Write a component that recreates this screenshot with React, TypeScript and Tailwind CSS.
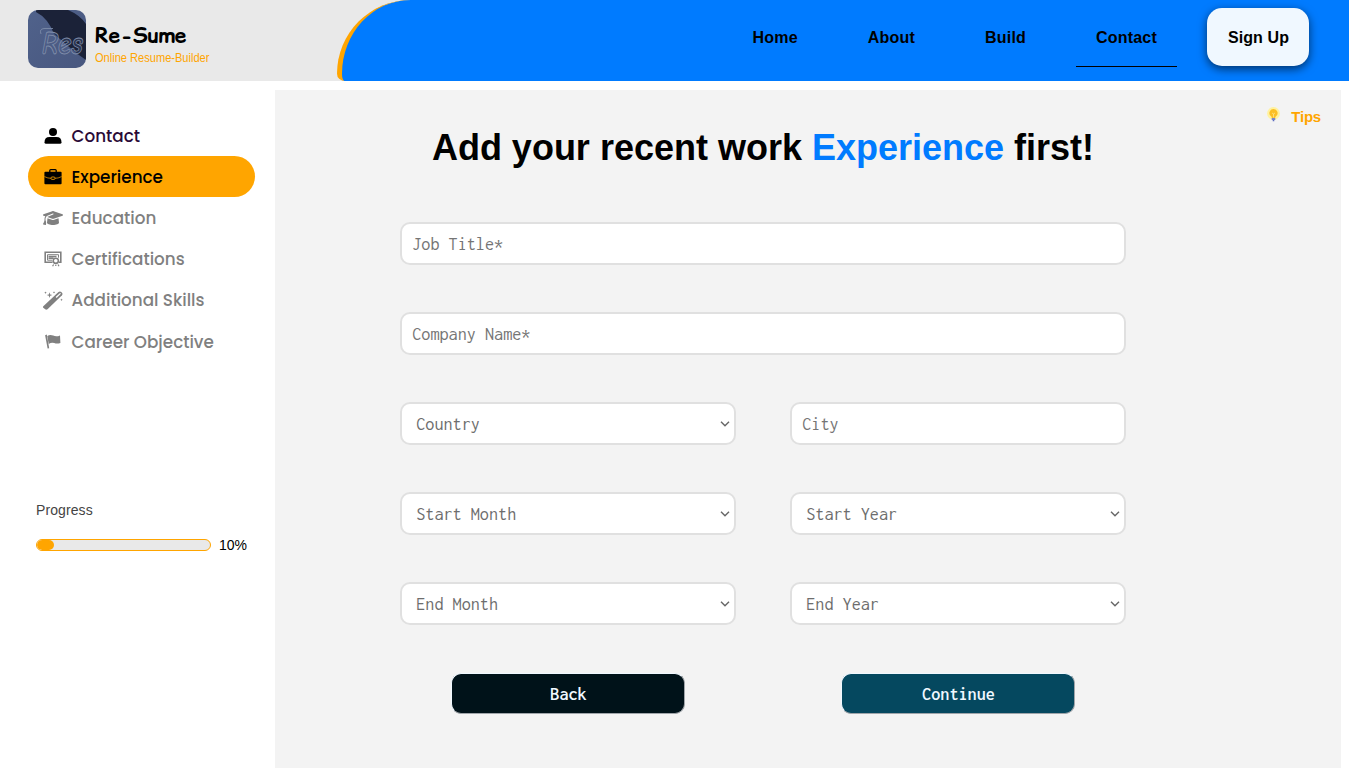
import React from "react";
import { FaGraduationCap } from "react-icons/fa6";

const MONO = "font-['Inconsolata','Noto_Sans_Mono_CJK_SC',monospace]";

function Logo() {
  return (
    <svg width="58" height="58" viewBox="0 0 58 58" className="rounded-[10px]">
      <defs>
        <linearGradient id="cloth" x1="0" y1="0" x2="1" y2="1">
          <stop offset="0" stopColor="#50628b" />
          <stop offset="1" stopColor="#48577f" />
        </linearGradient>
      </defs>
      <rect width="58" height="58" fill="url(#cloth)" />
      <path d="M8 0H40Q52 5 58 14V50Q49 44 40 36T26 24Q20 8 8 2Z" fill="#1b2238" />
      <g fontStyle="italic" fontWeight="700" fontFamily="Comic Neue, cursive" fill="#4f608a" fillOpacity="0.3" stroke="#8290ac" strokeWidth="0.8">
        <text x="14" y="44" fontSize="32" textLength="41" lengthAdjust="spacingAndGlyphs">
          Res
        </text>
      </g>
      <path d="M13 24Q11 19 16 18.5H25" fill="none" stroke="#8290ac" strokeWidth=".8" />
    </svg>
  );
}

function Person() {
  return (
    <svg width="18" height="16" viewBox="0 0 18 16" fill="currentColor">
      <circle cx="9" cy="4" r="4" />
      <path d="M5.5 9h7Q17.5 9 17.5 14.2 17.5 15.8 16 15.8H2Q.5 15.8.5 14.2.5 9 5.5 9Z" />
    </svg>
  );
}

function Briefcase() {
  return (
    <svg width="18" height="16" viewBox="0 0 18 16">
      <path d="M5.8 3V1.6Q5.8.7 6.7.7h4.6q.9 0 .9.9V3" fill="none" stroke="currentColor" strokeWidth="1.3" />
      <rect x=".4" y="2.8" width="17.2" height="12.4" rx="1" fill="currentColor" />
      <path d="M.4 7.6Q4 9.4 7 9.3M17.6 7.6Q14 9.4 11 9.3" fill="none" stroke="#ffa500" strokeWidth=".7" />
      <rect x="7" y="8" width="4" height="2.4" rx="1" fill="none" stroke="#ffa500" strokeWidth=".8" />
    </svg>
  );
}

function Certificate() {
  return (
    <svg width="18" height="16" viewBox="0 0 18 16" fill="none" stroke="currentColor">
      <path d="M8.5 11.3H1.2V1.2h15.6v10.1H15" strokeWidth="1.6" />
      <path d="M8 9.2H3.5V3.7h11v3" strokeWidth="1" />
      <path d="M4.5 5.5h8M4.5 7.3h5" strokeWidth="1.5" />
      <circle cx="11.8" cy="9.8" r="2.6" strokeWidth="1.6" />
      <path d="M9.6 13.5l-1 1.8M14 13.5l1 1.8M11.8 13.8V15" strokeWidth="1.2" />
    </svg>
  );
}

function Wand() {
  return (
    <svg width="20" height="19" viewBox="0 0 20 19" fill="currentColor">
      <path d="M.3 15.3 15.5 1Q17 0 18.3 1.1l.8.9q.9 1.2-.1 2.2L4.5 18.2Q3.4 19 2.2 18.3L.3 16.8Q-.4 16 .3 15.3Z" />
      <path d="m12.6 6 4.2-3.8q.4-.3.8.1.3.4 0 .8L13.6 7Z" fill="#fff" />
      <path d="m6.5 1.2.7 2.2 2.2.7-2.2.7-.7 2.2-.7-2.2L3.6 4.1l2.2-.7ZM2.5.4l.4.9.9.4-.9.4-.4.9-.4-.9-.9-.4.9-.4ZM11 .2l.4.8.8.4-.8.4-.4.8-.4-.8-.8-.4.8-.4ZM18.5 7.5l.4.9.9.4-.9.4-.4.9-.4-.9-.9-.4.9-.4Z" />
    </svg>
  );
}

function Flag() {
  return (
    <svg width="16" height="15" viewBox="0 0 16 15" fill="currentColor">
      <path d="M.1 1.2 1.8.4 4.2 14.2l-1.6.3Z" />
      <path d="M2.3 2Q5 .2 8.2 1.6T15 1.4l.4 7.5Q12 10.2 9.3 9.1T3.700 9.900Z" />
    </svg>
  );
}

function Bulb() {
  return (
    <svg width="13" height="15" viewBox="0 0 13 15">
      <circle cx="6.5" cy="6.5" r="6.4" fill="#fff2a0" />
      <path d="M6.5 2a4 4 0 0 0-2.5 7.2q.8.7.8 1.8h3.4q0-1.1.8-1.8A4 4 0 0 0 6.5 2Z" fill="#fbbf24" />
      <path d="M5 6l1.5 1L8 6M6.5 7v3.5" fill="none" stroke="#fde68a" strokeWidth=".8" />
      <rect x="4.7" y="11" width="3.6" height="2" rx=".6" fill="#7986cb" />
      <rect x="5.6" y="13" width="1.8" height="1.2" rx=".5" fill="#5c6bc0" />
    </svg>
  );
}

const steps = [
  { label: "Contact", icon: <Person />, tone: "text-[#2a0a37]", iconTone: "text-black" },
  { label: "Experience", icon: <Briefcase />, tone: "text-black", iconTone: "text-black" },
  { label: "Education", icon: <FaGraduationCap size={20} />, tone: "text-[#808080]", iconTone: "text-[#808080]" },
  { label: "Certifications", icon: <Certificate />, tone: "text-[#808080]", iconTone: "text-[#808080]" },
  { label: "Additional Skills", icon: <Wand />, tone: "text-[#808080]", iconTone: "text-[#808080]" },
  { label: "Career Objective", icon: <Flag />, tone: "text-[#808080]", iconTone: "text-[#808080]" },
];

function Field({ label, wide }: { label: string; wide?: boolean }) {
  return (
    <input
      placeholder={label}
      className={`${MONO} ${wide ? "col-span-2" : ""} h-[43px] w-full rounded-[10px] border-2 border-[#e0e0e0] bg-white pr-2.5 pl-[10.2px] text-[18.2px] text-[#757575] placeholder:text-[#757575]`}
    />
  );
}

function Select({ label }: { label: string }) {
  return (
    <div className={`${MONO} flex h-[43px] items-center justify-between rounded-[10px] border-2 border-[#e0e0e0] bg-white pr-1 pl-[14.2px] text-[18.2px] text-[#6d6d6d]`}>
      <span>{label}</span>
      <svg width="10" height="6" viewBox="0 0 10 6" fill="none" stroke="#666" strokeWidth="1.4">
        <path d="M1 .8 5 4.8 9 .8" />
      </svg>
    </div>
  );
}

export default function App() {
  return (
    <div className="flex h-[768px] w-[1349px] flex-col overflow-hidden bg-white font-['Liberation_Sans',Arial,sans-serif] text-black">
      <header className="flex h-[81px] shrink-0 justify-between bg-[#e9e9e9]">
        <div className="flex gap-[9px] pt-[10px] pl-7">
          <Logo />
          <div className="w-[140px] pt-[12px]">
            <div className="font-['Comic_Sans_MS','Comic_Relief',cursive] text-[21px] leading-7 font-bold">Re-Sume</div>
            <div className="origin-left scale-x-[0.82] text-[13.5px] leading-4 whitespace-nowrap text-[#ffa500]">Online Resume-Builder</div>
          </div>
        </div>
        <nav className="flex w-[1012px] justify-end gap-[30px] rounded-tl-[100px] rounded-bl-[10px] border-l-[5px] border-[#ffa500] bg-[#007bff] pt-2 pr-10 text-[16px] font-bold tracking-[0.2px]">
          {["Home", "About", "Build", "Contact"].map((item) => (
            <a key={item} className={`flex h-[59px] items-center border-b px-5 pt-0.5 ${item === "Contact" ? "border-black" : "border-transparent"}`}>
              {item}
            </a>
          ))}
          <button className="h-[58px] w-[102px] rounded-[15px] bg-[#f0f8ff] pt-0.5 pl-px font-bold tracking-[0.1px] shadow-[0_3px_10px_rgba(0,0,0,0.6)]">Sign Up</button>
        </nav>
      </header>

      <div className="flex min-h-0 flex-1 pt-[9px] pr-2">
        <aside className="w-[275px] shrink-0 pt-[25px] pr-5 pl-7">
          <ul className="font-['Poppins','Inter',sans-serif] text-[16.8px] font-medium">
            {steps.map((s) => (
              <li key={s.label} className={`flex h-[41.2px] items-center rounded-full pl-[14px] ${s.tone} ${s.label === "Experience" ? "bg-[#ffa500]" : ""}`}>
                <span className={`mr-[7.5px] flex w-[22px] justify-center ${s.iconTone}`}>{s.icon}</span>
                <span className="pt-[1.2px] whitespace-nowrap">{s.label}</span>
              </li>
            ))}
          </ul>
          <div className="mt-[140px] pl-2">
            <div className="text-[14px] leading-4 tracking-[0.1px] text-[#444]">Progress</div>
            <div className="mt-[19px] flex items-center gap-2">
              <div className="h-3 w-[175px] overflow-hidden rounded-full border border-[#ffa500] bg-[#e9e9e9]">
                <div className="h-full w-[17px] rounded-full bg-[#ffa500]" />
              </div>
              <span className="text-[14px] leading-4">10%</span>
            </div>
          </div>
        </aside>

        <main className="relative flex-1 bg-[#f3f3f3]">
          <div className="absolute top-[16px] right-5 flex items-start gap-[11px] text-[15px] font-bold text-[#ffa500]">
            <span className="mt-px">
              <Bulb />
            </span>
            <span className="tracking-[-0.2px]">Tips</span>
          </div>
          <div className="flex w-[976px] flex-col items-center pt-[37px]">
            <h1 className="text-[36px] leading-[42px] font-bold whitespace-nowrap">
              Add your recent work <span className="text-[#007bff]">Experience</span> first!
            </h1>
          </div>
          <form className="mt-[53px] ml-[125px] grid w-[726px] grid-cols-2 gap-x-[54px] gap-y-[47px]">
            <Field label="Job Title*" wide />
            <Field label="Company Name*" wide />
            <Select label="Country" />
            <Field label="City" />
            <Select label="Start Month" />
            <Select label="Start Year" />
            <Select label="End Month" />
            <Select label="End Year" />
            <button type="button" className={`${MONO} mt-px h-[41px] w-[234px] justify-self-center rounded-[10px] border border-t-[#f0f8ff] border-r-[#a0a5aa] border-b-[#a0a5aa] border-l-[#f0f8ff] bg-[#001219] pl-px text-[18.2px] font-semibold text-[#f0f8ff]`}>
              Back
            </button>
            <button type="button" className={`${MONO} mt-px h-[41px] w-[234px] justify-self-center rounded-[10px] border border-t-[#f0f8ff] border-r-[#a0a5aa] border-b-[#a0a5aa] border-l-[#f0f8ff] bg-[#05485f] pl-px text-[18.2px] font-semibold text-[#f0f8ff]`}>
              Continue
            </button>
          </form>
        </main>
      </div>
    </div>
  );
}
